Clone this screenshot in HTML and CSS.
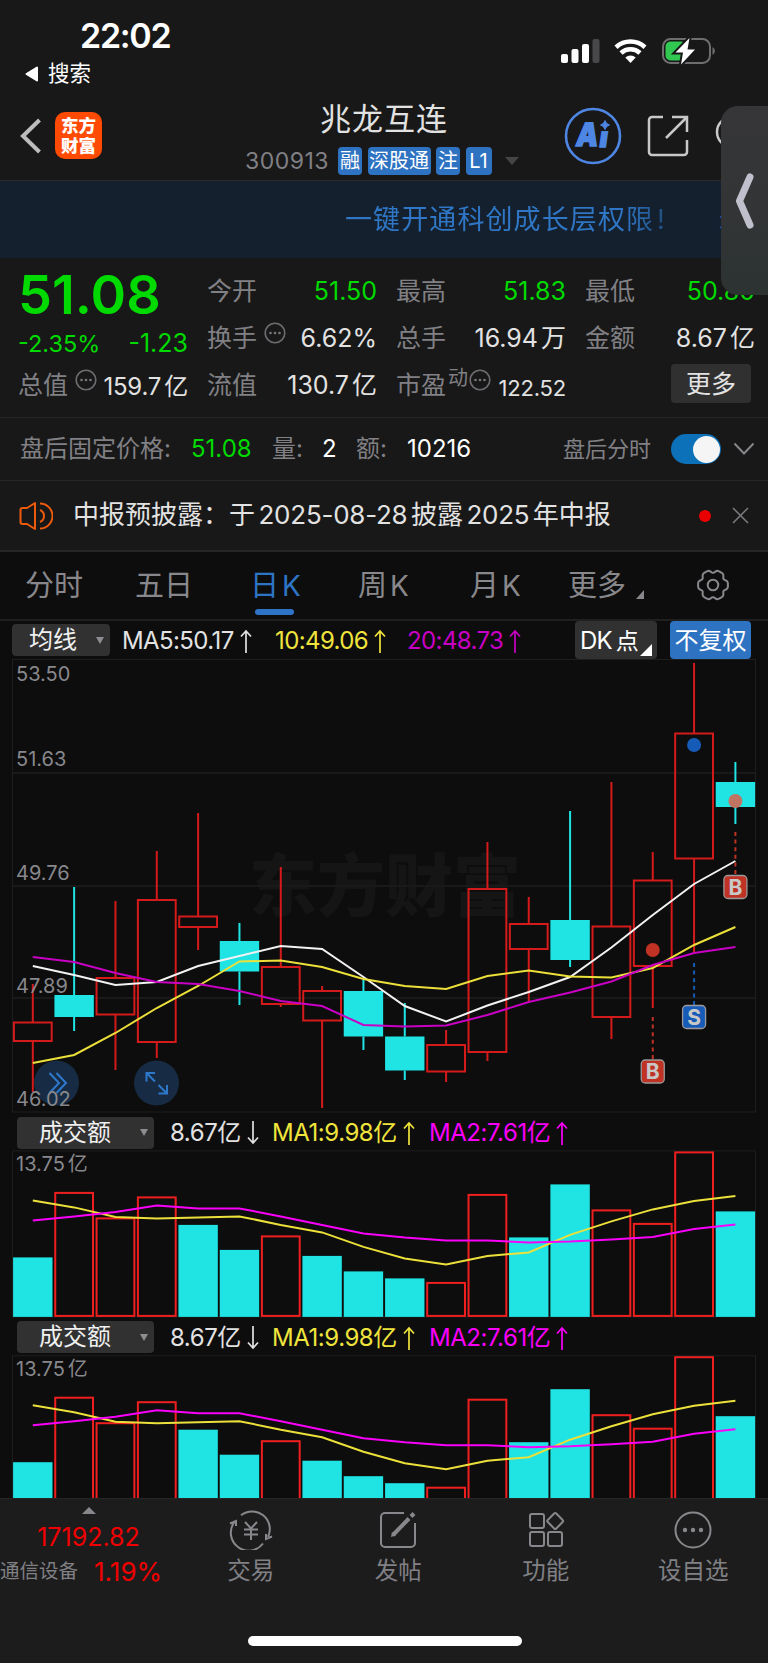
FILE: index.html
```html
<!DOCTYPE html>
<html lang="zh-CN">
<head>
    <meta charset="UTF-8">
    <meta name="viewport" content="width=device-width, initial-scale=1.0">
    <title>兆龙互连 300913</title>
    <link rel="stylesheet" href="styles.css">
</head>
<body>

    <div class="phone">
        <!-- Status bar -->
        <div class="status-bar">
            <div class="status-left">
                <div class="time">22:02</div>
                <div class="back-app">
                    <svg width="14" height="16" viewBox="0 0 14 16"><path d="M12 1.500v13L1.500 8z" fill="#fff" stroke="#fff" stroke-width="2" stroke-linejoin="round"/></svg>
                    <span>搜索</span>
                </div>
            </div>
            <div class="status-right">
                <svg width="156" height="28" viewBox="0 0 156 28">
                    <g fill="#fff">
                        <rect x="0" y="17" width="7" height="9" rx="2"/>
                        <rect x="10.500" y="12" width="7" height="14" rx="2"/>
                        <rect x="21" y="7" width="7" height="19" rx="2"/>
                        <rect x="31.500" y="2" width="7" height="24" rx="2" fill="#48484a"/>
                    </g>
                    <g fill="none" stroke="#fff" stroke-width="4.600">
                        <path d="M55 10.200a21.500 21.500 0 0 1 29 0"/>
                        <path d="M60 16a14 14 0 0 1 19 0"/>
                    </g>
                    <path d="M64.300 20.500a8 8 0 0 1 10.400 0L69.500 26z" fill="#fff"/>
                    <rect x="102" y="2" width="47" height="24" rx="7.500" fill="none" stroke="#6e6e70" stroke-width="2"/>
                    <rect x="104.500" y="4.500" width="20" height="19" rx="5" fill="#30c850"/>
                    <path d="M151.500 10v8a4.500 4.500 0 0 0 0-8z" fill="#6e6e70"/>
                    <path d="M128.500 1L114.500 15.500h7.500L120 27.500l14-15h-7.500z" fill="#fff" stroke="#181818" stroke-width="4" paint-order="stroke"/>
                </svg>
            </div>
        </div>

        <!-- Title bar -->
        <div class="header">
            <svg class="back" width="22" height="36" viewBox="0 0 22 36"><path d="M19.500 2L3 18l16.500 16" fill="none" stroke="#bdbdbd" stroke-width="4"/></svg>
            <div class="logo"><span>东方</span><span>财富</span></div>
            <div class="stock">
                <h1>兆龙互连</h1>
                <div class="tags">
                    <span class="code">300913</span>
                    <span class="tag t1">融</span>
                    <span class="tag t3">深股通</span>
                    <span class="tag t1">注</span>
                    <span class="tag t2">L1</span>
                    <i class="down"></i>
                </div>
            </div>
            <svg class="ai" width="58" height="58" viewBox="0 0 58 58">
                <circle cx="29" cy="29" r="27" fill="none" stroke="#4e86e4" stroke-width="2.600"/>
                <g fill="#4e86e4" stroke="#4e86e4" stroke-width="1.400" font-family="Inter" font-weight="900">
                    <text transform="translate(11 39) skewX(-8)" font-size="32" textLength="22" lengthAdjust="spacingAndGlyphs">A</text>
                    <text transform="translate(34.500 40) skewX(-8)" font-size="28">ı</text>
                </g>
                <path d="M41 13.500q1 3.500 4.500 4.500q-3.500 1-4.500 4.500q-1-3.500-4.500-4.500q3.500-1 4.500-4.500z" fill="#4e86e4" stroke="#4e86e4"/>
            </svg>
            <svg class="share" width="42" height="42" viewBox="0 0 42 42">
                <g fill="none" stroke="#c8c8c8" stroke-width="2.500">
                    <path d="M16 2H5a3 3 0 0 0-3 3v32a3 3 0 0 0 3 3h32a3 3 0 0 0 3-3V25"/>
                    <path d="M25 2h15v15M39.500 2.500L19 23"/>
                </g>
            </svg>
            <svg class="search" width="36" height="36" viewBox="0 0 36 36"><circle cx="17" cy="16" r="15" fill="none" stroke="#c8c8c8" stroke-width="2.500"/></svg>
        </div>

        <div class="banner"><span>一键开通科创成长层权限<b>!</b></span><i>×</i></div>

        <!-- Quote -->
        <div class="quote">
            <div class="price">51.08</div>
            <div class="cell"><label>今开</label><span class="green">51.50</span></div>
            <div class="cell"><label>最高</label><span class="green">51.83</span></div>
            <div class="cell"><label>最低</label><span class="green">50.80</span></div>

            <div class="change"><span>-2.35%</span><span class="diff">-1.23</span></div>
            <div class="cell"><label>换手</label><svg class="info" viewBox="0 0 22 22"><use href="#more-dot"/></svg><span>6.62%</span></div>
            <div class="cell"><label>总手</label><span>16.94<em>万</em></span></div>
            <div class="cell"><label>金额</label><span>8.67<em>亿</em></span></div>

            <div class="cell small"><label>总值</label><svg class="info" viewBox="0 0 22 22"><use href="#more-dot"/></svg><span>159.7<em>亿</em></span></div>
            <div class="cell"><label>流值</label><span>130.7<em>亿</em></span></div>
            <div class="cell pe"><label>市盈<sup>动</sup></label><svg class="info" viewBox="0 0 22 22"><use href="#more-dot"/></svg><span>122.52</span></div>
            <div class="cell"><button class="more">更多</button></div>
        </div>

        <div class="after-hours">
            <label>盘后固定价格:</label>
            <span class="green">51.08</span>
            <label>量:</label>
            <span>2</span>
            <label>额:</label>
            <span>10216</span>
            <label class="switch-label">盘后分时</label>
            <div class="switch"><i></i></div>
            <svg width="22" height="14" viewBox="0 0 22 14"><path d="M1.500 1.500L11 11.500l9.500-10" fill="none" stroke="#85858a" stroke-width="2"/></svg>
        </div>

        <div class="notice">
            <svg width="34" height="30" viewBox="0 0 34 30">
                <g fill="none" stroke="#ee5a0c" stroke-width="2">
                    <path d="M16 2v26L8 23H3.500Q1.500 23 1.500 21V9q0-2 2-2H8z" stroke-linejoin="round"/>
                    <path d="M21 2.500a12.500 12.500 0 0 1 0 25M21 9a6.500 6.500 0 0 1 0 12"/>
                </g>
            </svg>
            <p>中报预披露：于<span>2025-08-28</span>披露<span>2025</span>年中报</p>
            <i class="dot"></i>
            <svg width="17" height="17" viewBox="0 0 17 17"><path d="M1 1l15 15M16 1L1 16" stroke="#7c7c80" stroke-width="1.500"/></svg>
        </div>

        <!-- K line -->
        <div class="tabs">
            <span>分时</span>
            <span>五日</span>
            <span class="active">日<b>K</b></span>
            <span>周<b>K</b></span>
            <span>月<b>K</b></span>
            <span class="tab-more">更多<i></i></span>
            <svg width="34" height="34" viewBox="0 0 34 34">
                <g fill="none" stroke="#88888c" stroke-width="2">
                    <path id="gear" d=""/>
                    <circle cx="17" cy="17" r="5.300"/>
                </g>
            </svg>
        </div>

        <div class="ma-bar">
            <div class="select">均线<i></i></div>
            <span class="ma5">MA5:50.17<svg class="arrow" viewBox="0 0 12 24"><use href="#up"/></svg></span>
            <span class="ma10">10:49.06<svg class="arrow" viewBox="0 0 12 24"><use href="#up"/></svg></span>
            <span class="ma20">20:48.73<svg class="arrow" viewBox="0 0 12 24"><use href="#up"/></svg></span>
            <div class="dk">DK<em>点</em><i></i></div>
            <div class="fq">不复权</div>
        </div>

        <svg id="kline" class="chart" width="768" height="455" viewBox="0 659 768 455"></svg>

        <div class="vol-bar">
            <div class="select">成交额<i></i></div>
            <span class="now">8.67亿<svg class="arrow" viewBox="0 0 12 24"><use href="#down"/></svg></span>
            <span class="ma1">MA1:9.98亿<svg class="arrow" viewBox="0 0 12 24"><use href="#up"/></svg></span>
            <span class="ma2">MA2:7.61亿<svg class="arrow" viewBox="0 0 12 24"><use href="#up"/></svg></span>
        </div>
        <svg class="chart volume" width="768" height="168" viewBox="0 1149.600 768 168"></svg>

        <div class="vol-bar second">
            <div class="select">成交额<i></i></div>
            <span class="now">8.67亿<svg class="arrow" viewBox="0 0 12 24"><use href="#down"/></svg></span>
            <span class="ma1">MA1:9.98亿<svg class="arrow" viewBox="0 0 12 24"><use href="#up"/></svg></span>
            <span class="ma2">MA2:7.61亿<svg class="arrow" viewBox="0 0 12 24"><use href="#up"/></svg></span>
        </div>
        <svg class="chart volume" width="768" height="143" viewBox="0 1149.800 768 143"></svg>

        <!-- Bottom bar -->
        <div class="bottom">
            <div class="sector">
                <i></i>
                <div class="index">17192.82</div>
                <div class="sector-row"><label>通信设备</label><span>1.19%</span></div>
            </div>
            <div class="nav">
                <svg width="44" height="40" viewBox="0 0 44 40">
                    <g fill="none" stroke="#88888c" stroke-width="2">
                        <path d="M12 5.200A17.800 17.800 0 0 1 39 27M34 33.500A17.800 17.800 0 0 1 5.400 12M1 13.500l6-2.500v5M43 26.500l-6 2.500v-5"/>
                        <path d="M16 12l6 6.500 6-6.500M22 18.500V30M15 19.500h14M15 24.500h14"/>
                    </g>
                </svg>
                <span>交易</span>
            </div>
            <div class="nav">
                <svg width="40" height="40" viewBox="0 0 40 40">
                    <path d="M26 3H7a4 4 0 0 0-4 4v26a4 4 0 0 0 4 4h26a4 4 0 0 0 4-4V13" fill="none" stroke="#88888c" stroke-width="2"/>
                    <path d="M15 25L31 8.500M33 6.500l3-3" stroke="#88888c" stroke-width="4"/>
                    <path d="M13 27l1-5 4 3.500z" fill="#88888c"/>
                </svg>
                <span>发帖</span>
            </div>
            <div class="nav">
                <svg width="40" height="40" viewBox="0 0 40 40">
                    <g fill="none" stroke="#88888c" stroke-width="2">
                        <rect x="4" y="4" width="14" height="14" rx="2"/>
                        <rect x="4" y="22" width="14" height="14" rx="2"/>
                        <rect x="22" y="22" width="14" height="14" rx="2"/>
                        <rect x="23.200" y="5" width="12" height="12" rx="1.500" transform="rotate(45 29.200 11)"/>
                    </g>
                </svg>
                <span>功能</span>
            </div>
            <div class="nav">
                <svg width="40" height="40" viewBox="0 0 40 40">
                    <circle cx="20" cy="20" r="17.500" fill="none" stroke="#88888c" stroke-width="2"/>
                    <g fill="#88888c"><circle cx="12" cy="20" r="2.200"/><circle cx="20" cy="20" r="2.200"/><circle cx="28" cy="20" r="2.200"/></g>
                </svg>
                <span>设自选</span>
            </div>
            <div class="home"></div>
        </div>

        <div class="side-panel">
            <svg width="20" height="56" viewBox="0 0 20 56"><path d="M15 4L4.500 28 15 52" fill="none" stroke="#bfc0cb" stroke-width="7" stroke-linecap="round" stroke-linejoin="round"/></svg>
        </div>
    </div>

    <svg width="0" height="0" class="defs">
        <defs>
            <g id="more-dot">
                <circle cx="11" cy="11" r="9.800" fill="none" stroke="#6c6c70" stroke-width="1.600"/>
                <g fill="#77777b"><circle cx="6.500" cy="11" r="1.300"/><circle cx="11" cy="11" r="1.300"/><circle cx="15.500" cy="11" r="1.300"/></g>
            </g>
            <path id="up" d="M6 24V2M1 7.500L6 2l5 5.500" fill="none" stroke="currentColor" stroke-width="1.700"/>
            <path id="down" d="M6 0v22M1 16.500L6 22l5-5.500" fill="none" stroke="currentColor" stroke-width="1.700"/>
        </defs>
    </svg>

    <script src="script.js"></script>
</body>
</html>
```

FILE: styles.css
```css
* {
    box-sizing: border-box;
}
body {
    margin: 0;
    background-color: #181818;
    color: #e2e2e2;
    font-family: Inter, "Noto Sans CJK SC", sans-serif;
    font-size: 24px;
    line-height: 1;
}
i, em {
    font-style: normal;
}
svg {
    display: block;
    flex: none;
}
.defs {
    position: absolute;
}
.phone {
    position: relative;
    width: 768px;
    height: 1663px;
    overflow: hidden;
    display: flex;
    flex-direction: column;
}
.phone > * {
    flex: none;
}
.green {
    color: #00da00;
}

/* Status bar */
.status-bar {
    height: 96px;
    display: flex;
    justify-content: space-between;
    color: #fff;
}
.time {
    padding: 19px 0 0 80px;
    font-size: 34px;
    font-weight: 600;
    letter-spacing: -1.3px;
}
.back-app {
    display: flex;
    align-items: center;
    gap: 9px;
    padding: 10px 0 0 25px;
    font-size: 21.5px;
}
.status-right {
    padding: 37px 51px 0 0;
}

/* Header */
.header {
    height: 85px;
    display: flex;
    border-bottom: 1px solid #2a2a2a;
}
.back {
    margin: 22px 0 0 20px;
}
.logo {
    width: 47px;
    height: 47px;
    margin: 16px 0 0 13px;
    border-radius: 10px;
    background-color: #ff4a04;
    color: #fff;
    font-size: 17.5px;
    font-weight: 900;
    display: flex;
    flex-direction: column;
    align-items: center;
    justify-content: center;
    gap: 2px;
}
.stock {
    width: 290px;
    margin-left: 143px;
}
.stock h1 {
    margin: 7px 0 0 75px;
    font-size: 31px;
    font-weight: 400;
    letter-spacing: 1px;
}
.tags {
    display: flex;
    align-items: center;
    margin-top: 13px;
}
.code {
    width: 93px;
    color: #808085;
    font-size: 23px;
    letter-spacing: 0.5px;
}
.tag {
    height: 28px;
    line-height: 28px;
    margin-right: 5.5px;
    border-radius: 4px;
    background-color: #2e72c2;
    color: #fff;
    font-size: 20px;
    text-align: center;
    white-space: nowrap;
}
.t1 { width: 24px; }
.t2 { width: 26px; }
.t3 { width: 63px; }
.down {
    margin-left: 8px;
    border: 7px solid transparent;
    border-top: 8px solid #454545;
    border-bottom: 0;
}
.ai {
    margin: 11px 0 0 29px;
}
.share {
    margin: 19px 0 0 25px;
}
.search {
    margin: 20px 0 0 26px;
}

.banner {
    height: 77px;
    background-color: #14202e;
    display: flex;
    align-items: center;
    color: #2f77c6;
}
.banner span {
    width: 372px;
    margin-left: 345px;
    font-size: 27px;
    letter-spacing: 1.1px;
    white-space: nowrap;
    background: linear-gradient(to right, #2f77c6 75%, #1b3d63 90%);
    background-clip: text;
    color: transparent;
}
.banner b {
    margin-left: 3px;
    font-weight: 400;
}
.banner i {
    font-size: 30px;
}

/* Quote */
.quote {
    height: 160px;
    padding: 10px 0 0 19px;
    display: grid;
    grid-template-columns: repeat(4, 169px);
    grid-template-rows: repeat(3, 47.2px);
    column-gap: 20px;
    border-bottom: 1px solid #262626;
}
.cell {
    display: flex;
    align-items: center;
    justify-content: space-between;
    font-size: 25px;
    white-space: nowrap;
}
label {
    color: #808085;
}
.cell label {
    margin-left: -1px;
}
.cell em {
    margin-left: 3px;
}
.price {
    margin-left: -1px;
    color: #00da00;
    font-size: 54px;
    font-weight: 600;
}
.change {
    display: flex;
    align-items: center;
    justify-content: space-between;
    margin-left: -1px;
    padding-top: 10px;
    color: #00da00;
    font-size: 23.5px;
}
.diff {
    font-size: 25px;
}
.info {
    width: 22px;
    height: 22px;
    margin: -12px auto 0 7px;
}
.small span {
    font-size: 24px;
    letter-spacing: -0.2px;
    padding-top: 2px;
}
.pe span {
    font-size: 22px;
    letter-spacing: -0.2px;
    padding-top: 4px;
}
.pe .info {
    margin-left: 1px;
}
.pe sup {
    font-size: 20px;
    line-height: 0;
    vertical-align: 9px;
    margin-left: 2px;
}
.more {
    width: 80px;
    height: 39px;
    margin: -4px 0 0 85px;
    padding: 0 0 3px;
    border: none;
    border-radius: 4px;
    background-color: #303030;
    color: #e2e2e2;
    font-family: "Noto Sans CJK SC", sans-serif;
    font-size: 25px;
    line-height: 34px;
}

.after-hours {
    height: 63px;
    padding: 0 0 0 20px;
    display: grid;
    grid-template-columns: 171px 81px 50px 34px 51px 156px 108px 62px 22px;
    align-items: center;
    border-bottom: 1px solid #262626;
    font-size: 24px;
    white-space: nowrap;
    color: #fff;
}
.switch-label {
    font-size: 22px;
}
.switch {
    width: 50px;
    height: 30px;
    border-radius: 15px;
    background-color: #0c71b9;
    display: flex;
    align-items: center;
    justify-content: flex-end;
    padding-right: 1px;
}
.switch i {
    width: 27px;
    height: 27px;
    border-radius: 50%;
    background-color: #f5f5f5;
}

.notice {
    height: 71px;
    padding-left: 19px;
    display: flex;
    align-items: center;
    border-bottom: 2px solid #262626;
}
.notice p {
    width: 626px;
    margin: 0 0 2px 20px;
    font-size: 26px;
    white-space: nowrap;
}
.notice p span {
    margin: 0 3.5px;
    letter-spacing: -0.25px;
}
.dot {
    width: 12px;
    height: 12px;
    margin-right: 21px;
    border-radius: 50%;
    background-color: #ea0000;
}

/* Tabs */
.tabs {
    height: 69px;
    padding-left: 25px;
    display: grid;
    grid-template-columns: 110px 115px 108px 112px 98px 128px 34px;
    background-color: #0d0d0d;
    border-bottom: 2px solid #202020;
    color: #88888c;
    font-size: 29px;
    white-space: nowrap;
}
.tabs span {
    height: 63px;
    line-height: 67px;
}
.tabs b {
    font-size: 28px;
    font-weight: 400;
    margin-left: 3px;
}
.tabs svg {
    margin-top: 16px;
}
.tabs .active {
    color: #2e74c6;
}
.active::after {
    content: "";
    display: block;
    width: 39px;
    height: 6px;
    margin: -11px 0 0 5px;
    border-radius: 3px;
    background-color: #2e74c6;
}
.tab-more i {
    display: inline-block;
    margin-left: 10px;
    border-left: 8px solid transparent;
    border-bottom: 9px solid #88888c;
    vertical-align: -3px;
}

.ma-bar {
    height: 38px;
    padding-left: 12px;
    display: grid;
    grid-template-columns: 110px 153px 132px 168px 95px 81px;
    align-items: center;
    background-color: #0d0d0d;
    font-size: 24px;
    white-space: nowrap;
}
.select {
    width: 98px;
    height: 32px;
    padding: 0 6px 0 17px;
    border-radius: 4px;
    background-color: #313131;
    display: flex;
    align-items: center;
    justify-content: space-between;
    color: #f0f0f0;
    font-size: 24px;
}
.select i {
    border: 4.5px solid transparent;
    border-top: 7px solid #8e8e92;
    border-bottom: 0;
}
.ma-bar span, .vol-bar span {
    display: flex;
    align-items: center;
    letter-spacing: -0.45px;
    padding-top: 1px;
}
.ma-bar span {
    letter-spacing: -0.6px;
}
.arrow {
    width: 12px;
    height: 24px;
    margin-left: 6px;
}
.ma10, .ma1 {
    color: #f0e43c;
}
.ma20 {
    color: #c800c4;
}
.dk {
    position: relative;
    width: 82px;
    height: 38px;
    line-height: 39px;
    padding-left: 5px;
    border-radius: 4px;
    background-color: #313131;
    color: #fff;
    letter-spacing: -0.8px;
}
.dk em {
    margin-left: 4px;
    font-size: 23px;
}
.dk i {
    position: absolute;
    right: 5px;
    bottom: 3px;
    border-left: 12px solid transparent;
    border-bottom: 12px solid #fff;
}
.fq {
    height: 38px;
    line-height: 39px;
    border-radius: 4px;
    background-color: #2e72c2;
    color: #fff;
    text-align: center;
}

/* Charts */
.chart {
    background-color: #0d0d0d;
}
.chart text {
    font-family: Inter, "Noto Sans CJK SC", sans-serif;
}
.vol-bar {
    height: 36px;
    padding: 1px 0 0 17px;
    display: grid;
    grid-template-columns: 153px 102px 157px 150px;
    align-items: center;
    background-color: #0d0d0d;
    font-size: 24px;
    white-space: nowrap;
}
.vol-bar .select {
    width: 137px;
    padding-left: 22px;
}
.vol-bar .arrow {
    margin-left: 6px;
}
.vol-bar.second {
    height: 37px;
}
.ma2 {
    color: #fa00fa;
}

/* Bottom bar */
.bottom {
    position: relative;
    height: 165px;
    display: grid;
    grid-template-columns: 177px repeat(4, 147.5px);
    background-color: #1c1c1c;
    border-top: 1px solid #262626;
}
.sector i {
    display: block;
    width: 0;
    margin: 8px 0 0 82px;
    border: 7px solid transparent;
    border-bottom: 7px solid #88888c;
    border-top: 0;
}
.index {
    width: 177px;
    margin-top: 11px;
    text-align: center;
    font-size: 25px;
}
.sector-row {
    display: flex;
    align-items: center;
    margin-top: 9px;
    font-size: 26px;
    white-space: nowrap;
}
.sector-row label {
    width: 94px;
    font-size: 19.5px;
}
.sector-row span, .index {
    color: #f00000;
}
.nav {
    display: flex;
    flex-direction: column;
    align-items: center;
    padding-top: 11px;
    gap: 9px;
    color: #808085;
    font-size: 23.5px;
}
.home {
    position: absolute;
    left: 247.5px;
    bottom: 17px;
    width: 274px;
    height: 10px;
    border-radius: 5px;
    background-color: #fff;
}

/* Slide-over handle, lies above the page */
.side-panel {
    position: absolute;
    top: 106px;
    right: 0;
    width: 47px;
    height: 189px;
    border-radius: 17px 0 0 17px;
    background: linear-gradient(#363638, #323436 60%, #2c3331);
    padding: 67px 0 0 14px;
}
```

FILE: script.js
```javascript
const RED = '#d41a1a';
const CYAN = '#20e4e4';
const STEP = 41.33;

const cx = i => 32.8 + i * STEP;

// [high, body top, body bottom, low, up]
const candles = [
    [984, 1022.5, 1041, 1092, 1],
    [887, 995, 1017, 1031, 0],
    [901, 978, 1014.5, 1070, 1],
    [851, 900, 1042, 1058, 1],
    [813, 916.5, 927, 950, 1],
    [923, 941, 971.5, 1005, 0],
    [867, 967, 1004, 1007, 1],
    [986, 991, 1020.5, 1108, 1],
    [980, 991, 1036.5, 1050, 0],
    [1003, 1036.5, 1070.5, 1080, 0],
    [1030, 1045, 1071.5, 1082, 1],
    [842, 889, 1052, 1061, 1],
    [897, 924, 949, 1002, 1],
    [811, 920, 960, 967, 0],
    [782, 926.5, 1017, 1039, 1],
    [852, 880.5, 966, 1008, 1],
    [663, 733.5, 858.5, 954, 1],
    [762, 782, 807, 824, 0]
];
const ma5 = [966, 975, 985, 982, 966, 956, 946, 949, 977, 1006, 1021.5, 1005.5, 992, 977, 947.5, 915, 884, 861];
const ma10 = [1063, 1055, 1033, 1008, 986, 961.5, 960.5, 967, 979, 986, 989, 976, 970.5, 976.5, 977.5, 968, 945, 927];
const ma20 = [957, 962, 973, 982, 984, 991, 1001, 1006, 1025, 1026.5, 1025.5, 1015, 1002, 992.5, 981.5, 965, 953, 947];

// [top, up]
const volumes = [
    [1257, 0], [1192.5, 1], [1218, 1], [1197, 1], [1224.5, 0], [1249.5, 0],
    [1236, 1], [1255.5, 0], [1271, 0], [1278, 0], [1282.5, 1], [1194.5, 1],
    [1237, 0], [1184, 0], [1210, 1], [1223.5, 1], [1152, 1], [1211, 0]
];
const vma1 = [1200, 1207, 1216.5, 1218, 1217, 1216, 1224.5, 1232, 1246.5, 1258, 1264, 1255.5, 1252, 1234.5, 1221, 1209, 1200.5, 1195.5];
const vma2 = [1220, 1216, 1211.5, 1205, 1208, 1208, 1216, 1224.5, 1233, 1237, 1240, 1240, 1242, 1241, 1239, 1236.5, 1228.5, 1224];

function line(data, color) {
    const pts = data.map((y, i) => `${cx(i)},${y}`).join(' ');
    return `<polyline points="${pts}" fill="none" stroke="${color}" stroke-width="2"/>`;
}

function box(i, top, bottom, up, red) {
    if (up) {
        return `<rect x="${cx(i) - 18.9}" y="${top}" width="37.8" height="${bottom - top}" fill="none" stroke="${red}" stroke-width="2"/>`;
    }
    return `<rect x="${cx(i) - 19.7}" y="${top}" width="39.4" height="${bottom - top}" fill="${CYAN}"/>`;
}

function marker(i, y, text, color, from) {
    const x = cx(i);
    return `<path d="M${x} ${from}V${y - 12}" stroke="${color}" stroke-width="2" stroke-dasharray="4 3.6"/>
        <rect x="${x - 11.5}" y="${y - 11.5}" width="23" height="23" rx="4" fill="${color}" stroke="#9a9a9a" stroke-width="1.3"/>
        <text x="${x}" y="${y + 7.5}" font-size="21" font-weight="700" fill="#c8c8c8" text-anchor="middle">${text}</text>`;
}

function drawKline() {
    let s = '';
    s += '<text x="249" y="911" font-size="68" font-weight="900" fill="#151515">东方财富</text>';
    [773, 886, 998].forEach(y => s += `<path d="M12 ${y}H756" stroke="#191919" stroke-width="2"/>`);
    s += '<rect x="12.500" y="659.500" width="743" height="452.500" fill="none" stroke="#1e1e1e"/>';
    candles.forEach(([hi, top, bottom, lo, up], i) => {
        const x = cx(i);
        s += `<path d="M${x} ${hi}V${top}M${x} ${bottom}V${lo}" stroke="${up ? RED : CYAN}" stroke-width="2"/>`;
        s += box(i, top, bottom, up, RED);
    });
    s += line(ma5, '#f2f2f2') + line(ma10, '#ece03a') + line(ma20, '#c800c4');
    s += `<circle cx="${cx(16)}" cy="745" r="7" fill="#175bb8"/>
        <circle cx="${cx(17)}" cy="801" r="7" fill="#c07562"/>
        <circle cx="${cx(15)}" cy="950" r="7" fill="#c03324"/>`;
    s += marker(17, 887, 'B', '#c03324', 832);
    s += marker(16, 1017, 'S', '#175bb8', 963);
    s += marker(15, 1071.5, 'B', '#c03324', 1017);
    // round tool buttons
    s += `<g fill="none" stroke="#2e78cc" stroke-width="2">
        <circle cx="56.500" cy="1083" r="22.500" fill="#172c44" stroke="none"/>
        <circle cx="156.500" cy="1083" r="22.500" fill="#172c44" stroke="none"/>
        <path d="M49.500 1073l9.500 10-9.500 10M56.500 1073l9.500 10-9.500 10"/>
        <path d="M155 1073h-8.500v8.500M146.500 1073l8.500 8.500M158.500 1085l8.500 8.500M158.500 1093.500h8.500v-8.500"/>
    </g>`;
    [['53.50', 681], ['51.63', 766], ['49.76', 880], ['47.89', 993], ['46.02', 1105.5]].forEach(([t, y]) => {
        s += `<text x="16" y="${y}" font-size="20" fill="#88888c">${t}</text>`;
    });
    document.getElementById('kline').innerHTML = s;
}

function drawVolume(svg) {
    let s = '<rect x="12.500" y="1150.500" width="743" height="166" fill="none" stroke="#1e1e1e"/>';
    volumes.forEach(([top, up], i) => {
        s += box(i, top, up ? 1315.5 : 1316.5, up, '#f01f1f');
    });
    s += line(vma1, '#ece03a') + line(vma2, '#fa00fa');
    s += '<text x="16" y="1171" font-size="20" fill="#88888c">13.75<tspan dx="3">亿</tspan></text>';
    svg.innerHTML = s;
}

// wavy outline of the settings icon
function drawGear() {
    let d = '';
    for (let a = 0; a <= 360; a += 4) {
        const t = a * Math.PI / 180;
        const r = 14 + 1.4 * Math.cos(6 * t) - 0.5 * Math.cos(12 * t);
        d += (a ? 'L' : 'M') + (17 + r * Math.cos(t)).toFixed(2) + ' ' + (17 + r * Math.sin(t)).toFixed(2);
    }
    document.getElementById('gear').setAttribute('d', d + 'z');
}

drawKline();
document.querySelectorAll('.volume').forEach(drawVolume);
drawGear();
```
